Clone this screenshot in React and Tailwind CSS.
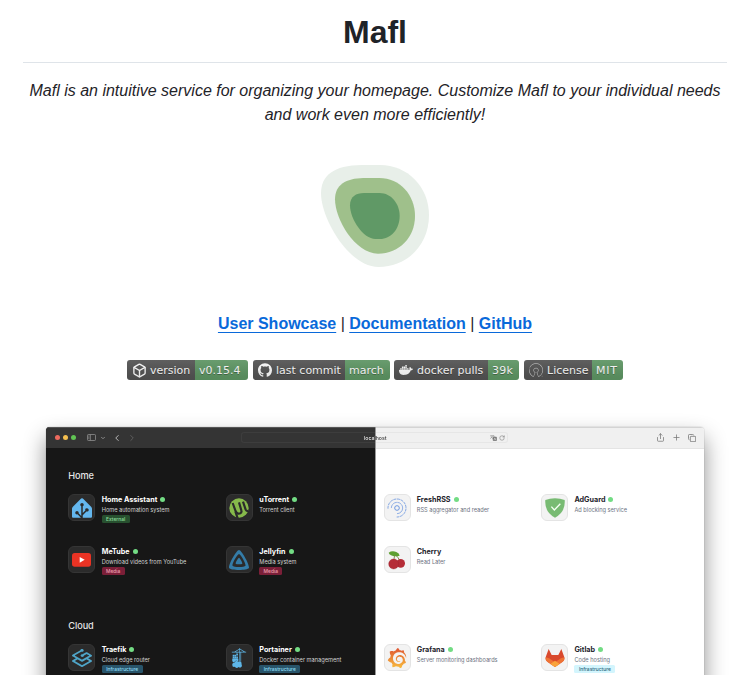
import React from "react";
import { Box, ChevronDown, ChevronLeft, ChevronRight, Plus, RotateCw, Share } from "lucide-react";
import {
  SiGithub, SiDocker, SiOpensourceinitiative, SiHomeassistant, SiJellyfin,
  SiGrafana, SiTraefikproxy, SiPortainer,
} from "react-icons/si";

function Logo() {
  return (
    <svg className="block" width="150" height="130" viewBox="0 0 450 390">
      <path fill="#e8efe9" d="M63 130C63 78 100 45 186 45H240C322 45 387 110 387 196C387 286 320 351 236 351C146 351 63 206 63 130Z" />
      <path fill="#9fc08b" d="M105 148C105 104 138 85 190 84H238C300 84 345 135 345 198C345 262 298 311 234 311C164 311 105 206 105 148Z" />
      <path fill="#609966" d="M150 166C150 140 168 129 192 129H239C274 129 299 162 299 198C299 238 272 267 240 267H226C190 267 150 208 150 166Z" />
    </svg>
  );
}

function Badge({ icon, label, value, labelClass, valueClass }) {
  return (
    <span className="relative flex h-5 overflow-hidden rounded-[3px] font-['DejaVu_Sans',sans-serif] text-[11px] leading-[21px] text-white [text-shadow:0_1px_0_rgba(1,1,1,0.3)]">
      <span className={"flex h-5 items-center gap-1 bg-[#555] pl-[5px] " + labelClass}>
        {icon}
        <span className="h-5 whitespace-nowrap">{label}</span>
      </span>
      <span className={"bg-[#609966] pl-1 whitespace-nowrap " + valueClass}>{value}</span>
      <span className="absolute inset-0 bg-linear-to-b from-[#bbb]/10 to-black/10" />
    </span>
  );
}

function UTorrent() {
  return (
    <svg width="20" height="20" viewBox="0 0 60 60">
      <circle cx="30" cy="30" r="29" fill="#86b94b" />
      <path d="M11 15L19 37Q24 50 34 46Q39 43 37 37L30 13" fill="none" stroke="#2b2b2b" strokeWidth="6.5" />
      <path d="M42 11L50 35Q52 40 58 39" fill="none" stroke="#2b2b2b" strokeWidth="6.5" />
      <path d="M19 40L26 61" fill="none" stroke="#2b2b2b" strokeWidth="6.5" />
    </svg>
  );
}

function FreshRss() {
  return (
    <svg width="20" height="20" viewBox="0 0 60 60" fill="none" stroke="#4f83dc" strokeWidth="2.4">
      <circle cx="30" cy="30" r="7" />
      <path d="M13 30A17 17 0 0 1 30 13A17 17 0 0 1 47 30" strokeDasharray="12 1.5" opacity=".75" />
      <path d="M47 30A17 17 0 0 1 30 47" opacity=".75" />
      <path d="M3 32A27 27 0 0 1 30 3A27 27 0 0 1 57 30A27 27 0 0 1 29 57" strokeDasharray="9 2" opacity=".85" />
    </svg>
  );
}

function Cherry() {
  return (
    <svg width="19" height="20" viewBox="0 0 57 60">
      <path d="M20 12Q19 26 16 36M20 12Q31 22 37 34" fill="none" stroke="#6b7f32" strokeWidth="2.5" />
      <path d="M2 8Q12 1 25 6Q34 10 35 17Q20 21 9 16Q3 13 2 8Z" fill="#5d9f31" />
      <circle cx="38" cy="40" r="13" fill="#b52c37" />
      <circle cx="17" cy="42" r="15" fill="#b52c37" stroke="#92222e" strokeWidth="1" />
    </svg>
  );
}

function Tanuki() {
  return (
    <svg width="20" height="18" viewBox="0 0 60 54">
      <path d="M11 0L20 18H40L49 0L57 22Q61 33 52 39L30 54L8 39Q-1 33 3 22Z" fill="#d9492d" />
      <path d="M2 25Q13 27 21 34L30 40L39 34Q47 27 58 25Q60 34 52 39L30 54L8 39Q0 34 2 25Z" fill="#ee7335" />
      <path d="M16 45L30 35L44 45L30 54Z" fill="#f9a33a" />
    </svg>
  );
}

function GrafanaMark() {
  return (
    <>
      <svg width="0" height="0" className="absolute">
        <linearGradient id="grafana" x1="0" x2="0" y1="0" y2="1">
          <stop stopColor="#df5532" />
          <stop offset="1" stopColor="#f8bb3e" />
        </linearGradient>
      </svg>
      <SiGrafana size={20} fill="url(#grafana)" />
    </>
  );
}

function YouTubeMark() {
  return (
    <svg width="19" height="14" viewBox="0 0 57 42">
      <rect width="57" height="41" rx="8" fill="#ea3324" />
      <path d="M23 12L38 20.5L23 29Z" fill="#fff" />
    </svg>
  );
}

function AdGuardMark() {
  return (
    <svg width="20" height="20" viewBox="0 0 60 60">
      <path d="M30 1Q46 1 59 6Q62 42 30 59Q-2 42 1 6Q14 1 30 1Z" fill="#78bb73" />
      <path d="M19 26L28 36L46 17" stroke="#f5fff3" strokeWidth="4" fill="none" />
    </svg>
  );
}

function SidebarIcon() {
  return (
    <svg className="ml-[10.5px] text-[#a0a0a0]" width="9" height="7" viewBox="0 0 27 21" fill="none" stroke="currentColor" strokeWidth="2">
      <rect x="1.5" y="1.5" width="24" height="18" rx="2.5" />
      <path d="M10 2V19M4 6H7M4 10H7M4 14H7" />
    </svg>
  );
}

function TranslateIcon() {
  return (
    <svg width="7" height="6" viewBox="0 0 21 18" fill="none" stroke="currentColor" strokeWidth="1.6">
      <path d="M1 2H12V7M1 11L8 3M2 4L9 11" />
      <rect x="9" y="6" width="11" height="11" rx="2" fill="currentColor" />
      <path d="M12 15L14.500 8.500L17 15" stroke="#f0f0f0" />
    </svg>
  );
}

function TabsIcon() {
  return (
    <svg width="8" height="8" viewBox="0 0 24 24" fill="none" stroke="currentColor" strokeWidth="2.4">
      <rect x="7" y="7" width="16" height="16" rx="2" />
      <path d="M4 17Q1.500 17 1.500 14V4Q1.500 1.500 4 1.500H14Q17 1.500 17 4" />
    </svg>
  );
}

const tagStyles = {
  External: "bg-[#27502f] text-[#8fdf9e] w-[28px]",
  Media: "bg-[#7b1f38] text-[#eda0b1] w-[23px]",
  Infrastructure: "bg-[#28546a] text-[#8fdcf4] w-[41px]",
  InfrastructureLight: "bg-[#d3f5fd] text-[#2d667d] w-[41px]",
};

function Service({ name, text, tag, icon, light, offline }) {
  return (
    <div className={"flex h-[30px] w-[157.6px] shrink-0 " + (light ? "gap-[6px]" : "gap-[6.5px]")}>
      <div className={"flex size-[27px] shrink-0 items-center justify-center rounded-[6px] border-[0.5px] " + (light ? "border-[#e4e4e4] bg-[#f3f3f3]" : "border-[#353535] bg-[#2b2b2b]")}>
        {icon}
      </div>
      <div className="flex flex-col items-start pt-[0.5px] whitespace-nowrap">
        <div className={"flex h-[9px] items-center gap-[3px] text-[7.2px] leading-[9px] font-bold " + (light ? "text-[#24242b]" : "text-white")}>
          <span>{name}</span>
          {!offline && <span className="size-[5px] rounded-full bg-[#73dc84]" />}
        </div>
        <div className={"mt-[2.2px] h-[8px] text-[5.65px] leading-[8px] " + (light ? "text-[#6c7280]" : "text-[#d2d2d2]")}>{text}</div>
        {tag && (
          <div className={"mt-[1.3px] h-[8px] rounded-[1.5px] text-center text-[4.9px] leading-[8px] font-medium " + tagStyles[light ? tag + "Light" : tag]}>{tag}</div>
        )}
      </div>
    </div>
  );
}

function DarkHalf() {
  return (
    <div className="w-[329.3px] shrink-0 overflow-hidden bg-[#171717] text-[#e5e5e5]">
      <div className="flex h-[21px] items-center border-t border-[#555] bg-[#343434] pb-px pl-[8.5px]">
        <div className="flex gap-[3.3px]">
          <span className="size-[5px] rounded-full bg-[#ed6a5e]" />
          <span className="size-[5px] rounded-full bg-[#f4bf4f]" />
          <span className="size-[5px] rounded-full bg-[#61c554]" />
        </div>
        <SidebarIcon />
        <ChevronDown className="ml-[4.5px] text-[#a5a5a5]" size={6} strokeWidth={3} />
        <ChevronLeft className="ml-[5.5px] text-[#bdbdbd]" size={10} strokeWidth={2.3} />
        <ChevronRight className="ml-[5px] text-[#5f5f5f]" size={10} strokeWidth={2.3} />
        <div className="ml-[104.5px] h-[11px] flex-1 rounded-l-[3px] border-y border-l border-[#3d3d3d]" />
      </div>
      <div className="pl-[22.2px]">
        <h2 className="mt-[21px] h-[14px] text-[9.2px] leading-[14px] font-medium tracking-[-0.05px]">Home</h2>
        <div className="mt-[11px] flex">
          <Service name="Home Assistant" text="Home automation system" tag="External" icon={<SiHomeassistant size={20} color="#64b7ee" />} />
          <Service name="uTorrent" text="Torrent client" icon={<UTorrent />} />
        </div>
        <div className="mt-[22px] flex">
          <Service name="MeTube" text="Download videos from YouTube" tag="Media" icon={<YouTubeMark />} />
          <Service name="Jellyfin" text="Media system" tag="Media" icon={<SiJellyfin size={20} color="#347ca8" />} />
        </div>
        <h2 className="mt-[43px] h-[14px] text-[9.2px] leading-[14px] font-medium tracking-[-0.05px]">Cloud</h2>
        <div className="mt-[11px] flex">
          <Service name="Traefik" text="Cloud edge router" tag="Infrastructure" icon={<SiTraefikproxy size={20} color="#4fa5c8" />} />
          <Service name="Portainer" text="Docker container management" tag="Infrastructure" icon={<SiPortainer size={20} color="#5eb7e9" />} />
        </div>
      </div>
    </div>
  );
}

function LightHalf() {
  return (
    <div className="flex-1 overflow-hidden border-l border-[#999] bg-white">
      <div className="flex h-[22px] items-center border-y border-t-[#d4d4d4] border-b-[#e4e4e4] bg-[#f0f0f0] pr-[8px] pb-px text-[#777]">
        <div className="flex h-[11px] w-[132px] items-center justify-end gap-[2.5px] rounded-r-[3px] border-y border-r border-[#e6e6e6] pr-[2px]">
          <TranslateIcon />
          <RotateCw size={6} strokeWidth={2.2} />
        </div>
        <div className="ml-auto flex items-center gap-[7px]">
          <Share size={9} strokeWidth={2} />
          <Plus size={9} strokeWidth={2} />
          <TabsIcon />
        </div>
      </div>
      <div className="pl-[7.5px]">
        <div className="mt-[45px] flex">
          <Service light name="FreshRSS" text="RSS aggregator and reader" icon={<FreshRss />} />
          <Service light name="AdGuard" text="Ad blocking service" icon={<AdGuardMark />} />
        </div>
        <div className="mt-[22px] flex">
          <Service light offline name="Cherry" text="Read Later" icon={<Cherry />} />
        </div>
        <div className="mt-[68px] flex">
          <Service light name="Grafana" text="Server monitoring dashboards" icon={<GrafanaMark />} />
          <Service light name="Gitlab" text="Code hosting" tag="Infrastructure" icon={<Tanuki />} />
        </div>
      </div>
    </div>
  );
}

const link = "font-bold text-[#0969da] underline underline-offset-[3.2px]";

export default function App() {
  return (
    <main className="h-[675px] w-[751px] overflow-hidden bg-white pr-6 pl-[23px] font-['Liberation_Sans',Arial,sans-serif] text-base text-[#1f2328]">
      <h1 className="mt-[12px] h-[51px] border-b border-[#d1d9e0b3] text-center text-[32px] leading-10 font-bold">Mafl</h1>
      <p className="mt-[16px] text-center leading-6 italic">
        Mafl is an intuitive service for organizing your homepage. Customize Mafl to your individual needs and work even more efficiently!
      </p>
      <div className="mt-[23px] ml-[277px] h-[162px]"><Logo /></div>
      <p className="text-center leading-6">
        <a className={link}>User Showcase</a> | <a className={link}>Documentation</a> | <a className={link}>GitHub</a>
      </p>
      <div className="mt-[24px] ml-[104px] flex">
        <Badge icon={<Box size={15} strokeWidth={2.2} className="-mr-[1px]" />} label="version" value="v0.15.4" labelClass="w-[68px]" valueClass="w-[53px]" />
        <span className="w-[5px]" />
        <Badge icon={<SiGithub size={14} />} label="last commit" value="march" labelClass="w-[92px]" valueClass="w-[45px]" />
        <span className="w-1" />
        <Badge icon={<SiDocker size={14} />} label="docker pulls" value="39k" labelClass="w-[94px]" valueClass="w-[31px] tracking-[0.2px]" />
        <span className="w-[5px]" />
        <Badge icon={<SiOpensourceinitiative size={14} className="opacity-80" />} label="License" value="MIT" labelClass="w-[68px]" valueClass="w-[31px] tracking-[0.7px]" />
      </div>
      <div className="relative mt-[47px] ml-[23px] flex h-[400px] w-[658px] overflow-hidden rounded-[4px] font-['Inter',sans-serif] shadow-[0_11px_22px_rgba(0,0,0,0.45),0_0_1px_rgba(0,0,0,0.5)]">
        <DarkHalf />
        <LightHalf />
        <span className="absolute top-[7px] left-[318px] bg-linear-to-r from-white from-[11.5px] to-[#333] to-[11.5px] bg-clip-text text-[5.2px] leading-[8px] font-medium text-transparent">localhost</span>
      </div>
    </main>
  );
}
